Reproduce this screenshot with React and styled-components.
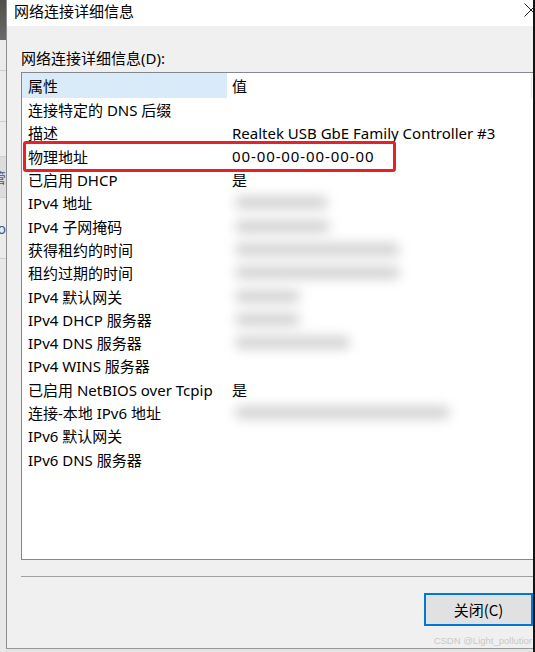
import styled, { createGlobalStyle } from 'styled-components';

const GlobalStyle = createGlobalStyle`
	html, body {
		margin: 0;
		padding: 0;
		background: #e4e4e4;
		overflow: hidden;
	}
	body {
		font-family: "Noto Sans", "Noto Sans CJK SC", sans-serif;
		color: #000;
	}
`

const Screen = styled.div`
	display: flex;
	width: 535px;
	height: 652px;
	overflow: hidden;
	background: #e4e4e4;
`

const BackWindow = styled.div`
	width: 6px;
	display: flex;
	flex-direction: column;
	background: #e8e8e8;
	overflow: hidden;
`

const BackTitle = styled.div`
	height: 40px;
	background: linear-gradient(#4f4f4b, #6a6a66);
`

const BackBand = styled.div`
	height: ${p => p.h}px;
	border-bottom: 1px solid #cfcfcf;
	background: ${p => p.dark ? '#dcdcdc' : '#ebebeb'};
	display: flex;
	justify-content: flex-end;
	align-items: center;
	white-space: nowrap;
	font-family: "Noto Sans CJK SC", sans-serif;
	font-size: 14px;
	color: #3a5a8a;
`

const Dialog = styled.div`
	width: 527px;
	height: 648px;
	display: flex;
	flex-direction: column;
	border-left: 1px solid #8d8d8d;
	border-bottom: 1px solid #9a9a9a;
	background: #f0f0f0;
`

const TitleBar = styled.div`
	height: 30px;
	background: #fff;
	display: flex;
	align-items: center;
	justify-content: space-between;
	padding-left: 7px;
	font-family: "Noto Sans CJK SC", sans-serif;
	font-size: 15px;
	line-height: 20px;
`

const Title = styled.span`
	margin-bottom: 4px;
`

const CloseIcon = styled.svg`
	width: 14px;
	height: 14px;
	margin-right: -5px;
	margin-bottom: 6px;
`

const Body = styled.div`
	flex: 1;
	display: flex;
	flex-direction: column;
	padding: 22px 0 0 14px;
	font-size: 15px;
`

const Caption = styled.div`
	height: 20px;
	line-height: 20px;
	margin-bottom: 4px;
`

const ListBox = styled.div`
	height: 486px;
	background: #fff;
	border: 1px solid #828790;
	border-right: none;
	display: flex;
	flex-direction: column;
`

const HeaderRow = styled.div`
	height: 25px;
	display: grid;
	grid-template-columns: 205px 1fr;
	border-right: 1px solid #e5e5e5;
	margin-right: 1px;
`

const HeaderCell = styled.div`
	display: flex;
	align-items: center;
	padding-left: ${p => p.first ? 6 : 5}px;
	background: ${p => p.first ? '#d9ebf9' : 'transparent'};
`

const Row = styled.div`
	position: relative;
	height: 23.3px;
	display: grid;
	grid-template-columns: 205px 1fr;
	align-items: center;
	white-space: nowrap;
`

const Cell = styled.div`
	padding-left: ${p => p.first ? 6 : 5}px;
	display: flex;
	align-items: center;
	letter-spacing: ${p => p.wide ? '0.9px' : 'normal'};
`

const Hidden = styled.div`
	width: ${p => p.w}px;
	height: 13px;
	margin-left: 3px;
	border-radius: 6px;
	background: #d2d2d2;
	filter: blur(6px);
`

const Mark = styled.div`
	position: absolute;
	left: 1px;
	top: -4px;
	bottom: -4px;
	width: 373px;
	border: 3px solid #e8202b;
	border-radius: 3px;
	box-sizing: border-box;
`

const Separator = styled.div`
	height: 1px;
	background: #a0a0a0;
	margin-top: 16px;
`

const Footer = styled.div`
	display: flex;
	flex-direction: column;
	align-items: flex-end;
	margin-top: 16px;
`

const Button = styled.button`
	width: 109px;
	height: 33px;
	margin: 0;
	padding: 0;
	border: 2px solid #0078d7;
	background: #e1e1e1;
	font-family: "Noto Sans CJK SC", sans-serif;
	font-size: 15px;
	color: #000;
`

const Watermark = styled.div`
	margin-top: 8px;
	margin-right: 1px;
	font-family: "Liberation Sans", sans-serif;
	font-size: 9.5px;
	line-height: 14px;
	color: #c9c9c9;
	white-space: nowrap;
`

const Edge = styled.div`
	width: 2px;
	background: #141414;
`

const rows = [
	['连接特定的 DNS 后缀', ''],
	['描述', 'Realtek USB GbE Family Controller #3'],
	['物理地址', '00-00-00-00-00-00', true],
	['已启用 DHCP', '是'],
	['IPv4 地址', 93],
	['IPv4 子网掩码', 95],
	['获得租约的时间', 165],
	['租约过期的时间', 165],
	['IPv4 默认网关', 65],
	['IPv4 DHCP 服务器', 65],
	['IPv4 DNS 服务器', 115],
	['IPv4 WINS 服务器', ''],
	['已启用 NetBIOS over Tcpip', '是'],
	['连接-本地 IPv6 地址', 215],
	['IPv6 默认网关', ''],
	['IPv6 DNS 服务器', ''],
]

function App() {
	return (
		<>
			<GlobalStyle />
			<Screen>
				<BackWindow>
					<BackTitle />
					<BackBand h={30} />
					<BackBand h={50} />
					<BackBand h={34} />
					<BackBand h={40} dark>管</BackBand>
					<BackBand h={60}>vo</BackBand>
				</BackWindow>

				<Dialog>
					<TitleBar>
						<Title>网络连接详细信息</Title>
						<CloseIcon viewBox="0 0 14 14">
							<path d="M0.5 0.5 L13.5 13.5 M13.5 0.5 L0.5 13.5" stroke="#222" strokeWidth="1" fill="none" />
						</CloseIcon>
					</TitleBar>

					<Body>
						<Caption>网络连接详细信息(D):</Caption>
						<ListBox>
							<HeaderRow>
								<HeaderCell first>属性</HeaderCell>
								<HeaderCell>值</HeaderCell>
							</HeaderRow>
							{rows.map(([name, value, marked]) => (
								<Row key={name}>
									<Cell first>{name}</Cell>
									<Cell wide={marked}>
										{typeof value === 'number' ? <Hidden w={value} /> : value}
									</Cell>
									{marked && <Mark />}
								</Row>
							))}
						</ListBox>
						<Separator />
						<Footer>
							<Button>关闭(C)</Button>
							<Watermark>CSDN @Light_pollutior</Watermark>
						</Footer>
					</Body>
				</Dialog>

				<Edge />
			</Screen>
		</>
	)
}

export default App;
